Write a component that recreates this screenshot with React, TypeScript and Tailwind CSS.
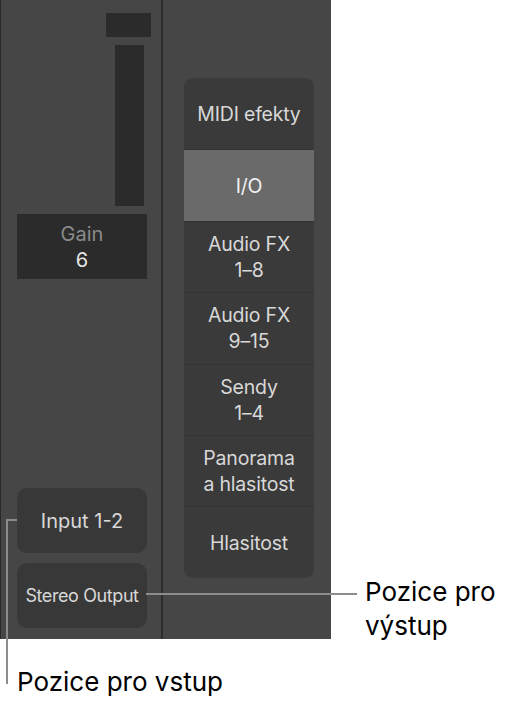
const items: string[][] = [
  ["MIDI efekty"],
  ["I/O"],
  ["Audio FX", "1–8"],
  ["Audio FX", "9–15"],
  ["Sendy", "1–4"],
  ["Panorama", "a hlasitost"],
  ["Hlasitost"],
];

export default function App() {
  return (
    <div className="relative w-[513px] h-[705px] bg-white font-['Inter',sans-serif]">
      <div className="flex w-[331px] h-[639px] bg-[#464646] border-l border-[#2a2a2a]">
        {/* left channel strip */}
        <div className="w-[162px] shrink-0 border-r-2 border-[#2c2c2c] flex flex-col">
          <div className="h-[13px]" />
          <div className="flex justify-end pr-[10px]">
            <div className="w-[45px] h-[24px] bg-[#2b2b2b]" />
          </div>
          <div className="flex justify-end pr-[17px] mt-[8px]">
            <div className="w-[29px] h-[161px] bg-[#2b2b2b]" />
          </div>
          <div className="ml-[16px] mt-[8px] w-[130px] h-[65px] bg-[#2b2b2b] flex flex-col items-center justify-center">
            <span className="text-[20px] leading-[26px] text-[#8a8a8a]">Gain</span>
            <span className="text-[20px] leading-[26px] text-[#e6e6e6]">6</span>
          </div>
          <div className="flex-1" />
          <div className="ml-[16px] w-[130px] h-[65px] rounded-[10px] bg-[#383838] flex items-center justify-center text-[20px] text-[#d8d8d8]">
            Input 1-2
          </div>
          <div className="ml-[16px] mt-[10px] mb-[11px] w-[130px] h-[65px] rounded-[10px] bg-[#383838] flex items-center justify-center text-[18px] tracking-[-0.4px] text-[#d8d8d8] whitespace-nowrap">
            Stereo Output
          </div>
        </div>
        {/* right column */}
        <div className="flex-1 pt-[78px] pl-[21px] pr-[16px]">
          <div className="w-[130px] rounded-[9px] bg-[#3a3a3a] overflow-hidden flex flex-col">
            {items.map((lines, i) => (
              <div
                key={i}
                className={`h-[71.4px] flex flex-col items-center justify-center text-[19.5px] leading-[26px] tracking-[-0.2px] ${
                  i === 1 ? "bg-[#6a6a6a] text-[#f2f2f2]" : "text-[#d8d8d8]"
                } ${i > 0 ? "border-t border-[#343434]" : ""}`}
              >
                {lines.map((l) => (
                  <span key={l}>{l}</span>
                ))}
              </div>
            ))}
          </div>
        </div>
      </div>

      {/* callouts */}
      <div className="absolute left-[6px] top-[519px] w-[11px] h-[2px] bg-[#8c8c8c]" />
      <div className="absolute left-[6px] top-[519px] w-[2px] h-[165px] bg-[#8c8c8c]" />
      <div className="absolute left-[17px] top-[665px] text-[26px] leading-[34px] text-black">
        Pozice pro vstup
      </div>
      <div className="absolute left-[146px] top-[593px] w-[211px] h-[2px] bg-[#8c8c8c]" />
      <div className="absolute left-[365px] top-[575px] text-[26px] leading-[34px] text-black">
        Pozice pro
        <br />
        výstup
      </div>
    </div>
  );
}
